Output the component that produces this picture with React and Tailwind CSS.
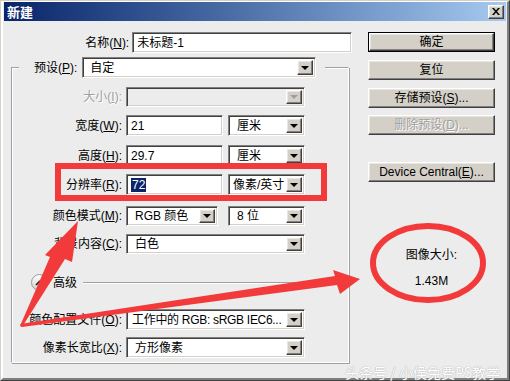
import React from "react";

const sunken =
  "border border-t-[#808080] border-l-[#808080] border-b-white border-r-white shadow-[inset_1px_1px_0_#404040,inset_-1px_-1px_0_#d4d0c8]";
const raised =
  "border border-t-white border-l-white border-b-[#404040] border-r-[#404040] shadow-[inset_-1px_-1px_0_#808080,inset_1px_1px_0_#e8e6e0]";

const U = ({ children }) => <span className="underline underline-offset-1">{children}</span>;

function Arrow({ disabled }) {
  return (
    <div className={`w-[16px] h-full bg-[#d4d0c8] ${raised} flex items-center justify-center`}>
      <div
        className={`w-0 h-0 border-l-[4px] border-r-[4px] border-t-[4px] border-l-transparent border-r-transparent ${
          disabled ? "border-t-[#a0a0a0]" : "border-t-black"
        }`}
      />
    </div>
  );
}

function Select({ w, h = "h-[21px]", children, disabled, pl = "pl-[6px]" }) {
  return (
    <div className={`${w} ${h} ${sunken} ${disabled ? "bg-[#ececec]" : "bg-white"} flex items-stretch p-[2px]`}>
      <div className={`flex-1 flex items-center ${pl} whitespace-nowrap overflow-hidden`}>{children}</div>
      <Arrow disabled={disabled} />
    </div>
  );
}

function Input({ w, children }) {
  return (
    <div className={`${w} h-[21px] ${sunken} bg-white flex items-center pl-[4px]`}>{children}</div>
  );
}

function Label({ children, disabled }) {
  return (
    <div
      className={`w-[110px] text-right mr-[4px] ${
        disabled ? "text-[#a0a0a0] [text-shadow:1px_1px_0_#fff]" : "text-black"
      }`}
    >
      {children}
    </div>
  );
}

function Btn({ children, mt, def, disabled }) {
  return (
    <div className={`${mt} ${def ? "border border-black" : ""}`}>
      <div
        className={`w-full ${def ? "h-[18px]" : "h-[20px]"} bg-[#d4d0c8] ${raised} flex items-center justify-center ${
          disabled ? "text-[#a0a0a0] [text-shadow:1px_1px_0_#fff]" : "text-black"
        }`}
      >
        {children}
      </div>
    </div>
  );
}

export default function App() {
  return (
    <div className="relative w-[510px] h-[381px] overflow-hidden bg-[#ececec] text-[12px] leading-[14px] font-['Liberation_Sans','Noto_Sans_CJK_SC',sans-serif]">
      <div className="w-full h-full border border-t-[#d4d0c8] border-l-[#d4d0c8] border-b-[#404040] border-r-[#404040]">
        <div className="w-full h-full border-2 border-t-white border-l-white border-b-[#808080] border-r-[#808080] border-t-[1px] flex flex-col">
          {/* title bar */}
          <div className="h-[19px] mx-[1px] bg-gradient-to-r from-[#0a246a] to-[#a6caf0] flex items-center justify-between pl-[3px] pr-[2px]">
            <span className="text-white font-bold text-[13px] font-['Noto_Sans_CJK_SC',sans-serif]">新建</span>
            <div className={`w-[16px] h-[14px] bg-[#d4d0c8] ${raised} flex items-center justify-center`}>
              <svg width="8" height="7" viewBox="0 0 8 7">
                <path d="M0 0 L2 0 L4 2.5 L6 0 L8 0 L5 3.5 L8 7 L6 7 L4 4.5 L2 7 L0 7 L3 3.5 Z" fill="#000" />
              </svg>
            </div>
          </div>

          {/* body */}
          <div className="flex pt-[11px]">
            {/* left column */}
            <div className="w-[349px] pl-[8px]">
              <div className="flex items-center h-[21px]">
                <div className="w-[120px] text-right mr-[3px]">
                  名称(<U>N</U>):
                </div>
                <Input w="w-[223px]">未标题-1</Input>
              </div>

              <div className="mt-[14px] w-[338px] border border-t-[#a0a0a0] border-l-[#a0a0a0] border-b-white border-r-white shadow-[inset_1px_1px_0_#fff,1px_1px_0_#a0a0a0] pb-[4px]">
                {/* preset row over the top line */}
                <div className="-mt-[11px] ml-[7px] w-[306px] bg-[#ececec] flex items-center pl-[15px]">
                  <div className="mr-[5px]">
                    预设(<U>P</U>):
                  </div>
                  <Select w="w-[234px]" pl="pl-[5px]">自定</Select>
                </div>

                <div className="flex items-center mt-[9px] h-[20px]">
                  <Label disabled>
                    大小(<U>I</U>):
                  </Label>
                  <Select w="w-[179px]" h="h-[20px]" disabled />
                </div>

                <div className="flex items-center mt-[8px]">
                  <Label>
                    宽度(<U>W</U>):
                  </Label>
                  <Input w="w-[97px]">21</Input>
                  <div className="ml-[5px]">
                    <Select w="w-[77px]">厘米</Select>
                  </div>
                </div>

                <div className="flex items-center mt-[9px]">
                  <Label>
                    高度(<U>H</U>):
                  </Label>
                  <Input w="w-[97px]">29.7</Input>
                  <div className="ml-[5px]">
                    <Select w="w-[77px]">厘米</Select>
                  </div>
                </div>

                <div className="flex items-center mt-[8px]">
                  <Label>
                    分辨率(<U>R</U>):
                  </Label>
                  <Input w="w-[97px]">
                    <span className="bg-[#0a246a] text-white px-[1px]">72</span>
                  </Input>
                  <div className="ml-[5px]">
                    <Select w="w-[77px]" pl="pl-[2px]">像素/英寸</Select>
                  </div>
                </div>

                <div className="flex items-center mt-[11px]">
                  <Label>
                    颜色模式(<U>M</U>):
                  </Label>
                  <Select w="w-[92px]" h="h-[20px]">RGB 颜色</Select>
                  <div className="ml-[10px]">
                    <Select w="w-[77px]" h="h-[20px]">8 位</Select>
                  </div>
                </div>

                <div className="flex items-center mt-[8px]">
                  <Label>
                    背景内容(<U>C</U>):
                  </Label>
                  <Select w="w-[179px]" h="h-[20px]">白色</Select>
                </div>

                <div className="flex items-center mt-[20px] h-[17px] pl-[19px]">
                  <div className="w-[17px] h-[17px] rounded-full bg-gradient-to-b from-white to-[#d4d0c8] border border-[#9a9a9a] flex items-center justify-center">
                    <svg width="9" height="6" viewBox="0 0 9 6">
                      <path d="M1 5 L4.5 1.5 L8 5" stroke="#222" strokeWidth="1.6" fill="none" />
                    </svg>
                  </div>
                  <span className="ml-[5px]">高级</span>
                  <div className="ml-[6px] w-[214px] h-[2px] border-t border-t-[#a0a0a0] border-b border-b-white" />
                </div>

                <div className="flex items-center mt-[18px]">
                  <Label>
                    颜色配置文件(<U>O</U>):
                  </Label>
                  <Select w="w-[179px]" pl="pl-[3px]">
                    <span className="tracking-[-0.3px]">工作中的 RGB: sRGB IEC6...</span>
                  </Select>
                </div>

                <div className="flex items-center mt-[7px]">
                  <Label>
                    像素长宽比(<U>X</U>):
                  </Label>
                  <Select w="w-[179px]">方形像素</Select>
                </div>
              </div>
            </div>

            {/* right column */}
            <div className="ml-[16px] w-[127px] flex flex-col">
              <Btn def>确定</Btn>
              <Btn mt="mt-[8px]">复位</Btn>
              <Btn mt="mt-[8px]">
                存储预设(<U>S</U>)...
              </Btn>
              <Btn mt="mt-[7px]" disabled>
                删除预设(<U>D</U>)...
              </Btn>
              <Btn mt="mt-[27px]">
                Device Central(<U>E</U>)...
              </Btn>
              <div className="mt-[66px] text-center">图像大小:</div>
              <div className="mt-[12px] text-center">1.43M</div>
            </div>
          </div>
        </div>
      </div>

      {/* red annotations */}
      <svg className="absolute inset-0 pointer-events-none" width="510" height="381" viewBox="0 0 510 381">
        <rect x="58" y="166" width="266" height="32" fill="none" stroke="#f23a3a" strokeWidth="6" />
        <ellipse cx="428" cy="263" rx="55" ry="37" fill="none" stroke="#f23a3a" strokeWidth="6" />
        <polygon points="20,326 50,257 45,255 78,221 72,262 65,259 22,327" fill="#f23a3a" />
        <polygon points="20,324 335,276 333,270 360,279 340,294 337,285 22,327" fill="#f23a3a" />
      </svg>

      <div className="absolute right-[10px] bottom-[2px] text-[14px] text-white font-['Noto_Sans_CJK_SC',sans-serif] [text-shadow:0_0_1px_#b0b0b0,0_0_1px_#b0b0b0]">
        头条号 / 小侯免费PS教学
      </div>
    </div>
  );
}
